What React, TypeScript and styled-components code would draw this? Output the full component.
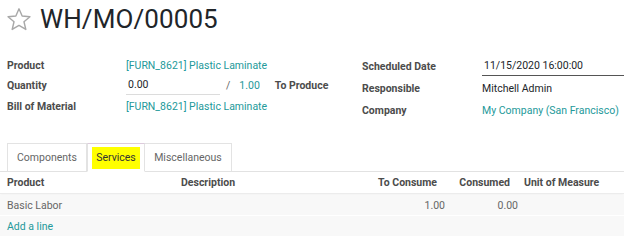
import React from 'react';
import styled, { createGlobalStyle } from 'styled-components';

const GlobalStyle = createGlobalStyle`
  html, body {
    margin: 0;
    padding: 0;
    background: #ffffff;
  }
  body {
    font-family: Roboto, "Noto Sans", "Liberation Sans", sans-serif;
    font-size: 10.5px;
    color: #212529;
  }
`;

const teal = '#23999a';

const Page = styled.div`
  width: 624px;
  height: 241px;
  overflow: hidden;
  background: #fff;
`;

const TitleRow = styled.div`
  display: flex;
  align-items: center;
  gap: 8px;
  padding: 4px 0 0 6px;
  height: 30px;
`;

const Title = styled.h1`
  margin: 0;
  font-size: 26px;
  font-weight: 400;
  color: #212529;
  letter-spacing: 0.1px;
`;

const FormGroups = styled.div`
  display: grid;
  grid-template-columns: 355px 262px;
  margin-top: 21px;
  padding-left: 7px;
`;

const FieldTable = styled.div<{ $labelWidth: number; $rows: string }>`
  display: grid;
  grid-template-columns: ${({ $labelWidth }) => $labelWidth}px 1fr;
  grid-template-rows: ${({ $rows }) => $rows};
  align-items: center;
`;

const Label = styled.div`
  font-weight: 700;
  color: #4c4c4c;
`;

const LinkValue = styled.span`
  color: ${teal};
`;

const PlainValue = styled.span`
  color: #212529;
`;

const Underlined = styled.div<{ $width?: number; $dark?: boolean }>`
  width: ${({ $width }) => ($width ? `${$width}px` : 'auto')};
  padding: 2px 2px 3px;
  border-bottom: 1px solid ${({ $dark }) => ($dark ? '#555' : '#dcdcdc')};
  color: #212529;
`;

const QuantityLine = styled.div`
  display: flex;
  align-items: center;
`;

const Slash = styled.span`
  margin: 0 9px 0 6px;
  color: #666;
`;

const ToProduce = styled.span`
  margin-left: 15px;
  font-weight: 700;
  color: #4c4c4c;
`;

const Tabs = styled.div`
  display: flex;
  margin-top: 22px;
  padding-left: 7px;
  border-bottom: 1px solid #e3e3e3;
  height: 28px;
`;

const Tab = styled.div<{ $active?: boolean; $width: number }>`
  width: ${({ $width }) => $width}px;
  box-sizing: border-box;
  display: flex;
  align-items: center;
  justify-content: center;
  border: 1px solid #e3e3e3;
  border-left-width: ${({ $active }) => ($active ? '1px' : '0')};
  border-top-color: ${({ $active }) => ($active ? '#dccbdc' : '#e3e3e3')};
  border-bottom: ${({ $active }) => ($active ? '1px solid #fff' : 'none')};
  margin-bottom: ${({ $active }) => ($active ? '-1px' : '0')};
  background: #fff;
  color: ${({ $active }) => ($active ? '#333' : '#666')};
  &:first-child {
    border-left-width: 1px;
  }
`;

const Highlight = styled.span`
  background: #ffff00;
  padding: 4px 4px 5px;
`;

const Grid = styled.div`
  display: grid;
  grid-template-columns: 174px 188px 85px 73px 1fr;
`;

const HeaderRow = styled(Grid)`
  height: 21px;
  align-items: center;
  font-weight: 700;
  color: #4c4c4c;
  border-bottom: 1px solid #ececec;
  box-shadow: 0 1px 2px rgba(0, 0, 0, 0.06);
`;

const DataRow = styled(Grid)`
  height: 20px;
  align-items: center;
  background: #f8f8f8;
  color: #666;
  margin-top: 1px;
`;

const Cell = styled.div<{ $right?: boolean; $pad?: string }>`
  text-align: ${({ $right }) => ($right ? 'right' : 'left')};
  padding: ${({ $pad }) => $pad || '0 0 0 7px'};
  white-space: nowrap;
`;

const AddLine = styled.div`
  height: 20px;
  display: flex;
  align-items: center;
  padding-left: 7px;
  background: #f8f8f8;
  margin-top: 1px;
  color: ${teal};
`;

const Star = () => (
  <svg width="26" height="25" viewBox="0 0 24 23" fill="none">
    <path
      d="M12 1.6 L14.9 8.3 L22.1 8.9 L16.6 13.6 L18.3 20.7 L12 16.9 L5.7 20.7 L7.4 13.6 L1.9 8.9 L9.1 8.3 Z"
      stroke="#a8a8a8"
      strokeWidth="1.3"
      strokeLinejoin="round"
    />
  </svg>
);

export default function App() {
  return (
    <Page>
      <GlobalStyle />
      <TitleRow>
        <Star />
        <Title>WH/MO/00005</Title>
      </TitleRow>

      <FormGroups>
        <FieldTable $labelWidth={119} $rows="21px 19px 22px">
          <Label>Product</Label>
          <LinkValue>[FURN_8621] Plastic Laminate</LinkValue>
          <Label>Quantity</Label>
          <QuantityLine>
            <Underlined $width={90}>0.00</Underlined>
            <Slash>/</Slash>
            <LinkValue>1.00</LinkValue>
            <ToProduce>To Produce</ToProduce>
          </QuantityLine>
          <Label>Bill of Material</Label>
          <LinkValue>[FURN_8621] Plastic Laminate</LinkValue>
        </FieldTable>

        <FieldTable $labelWidth={120} $rows="22px 22px 22px">
          <Label>Scheduled Date</Label>
          <Underlined $dark>11/15/2020 16:00:00</Underlined>
          <Label>Responsible</Label>
          <PlainValue>Mitchell Admin</PlainValue>
          <Label>Company</Label>
          <LinkValue>My Company (San Francisco)</LinkValue>
        </FieldTable>
      </FormGroups>

      <Tabs>
        <Tab $width={80}>Components</Tab>
        <Tab $width={58} $active>
          <Highlight>Services</Highlight>
        </Tab>
        <Tab $width={87}>Miscellaneous</Tab>
      </Tabs>

      <HeaderRow>
        <Cell>Product</Cell>
        <Cell>Description</Cell>
        <Cell $right $pad="0 10px 0 0">To Consume</Cell>
        <Cell $right $pad="0 10px 0 0">Consumed</Cell>
        <Cell $pad="0 0 0 4px">Unit of Measure</Cell>
      </HeaderRow>
      <DataRow>
        <Cell>Basic Labor</Cell>
        <Cell />
        <Cell $right $pad="0 2px 0 0">1.00</Cell>
        <Cell $right $pad="0 2px 0 0">0.00</Cell>
        <Cell />
      </DataRow>
      <AddLine>Add a line</AddLine>
    </Page>
  );
}
